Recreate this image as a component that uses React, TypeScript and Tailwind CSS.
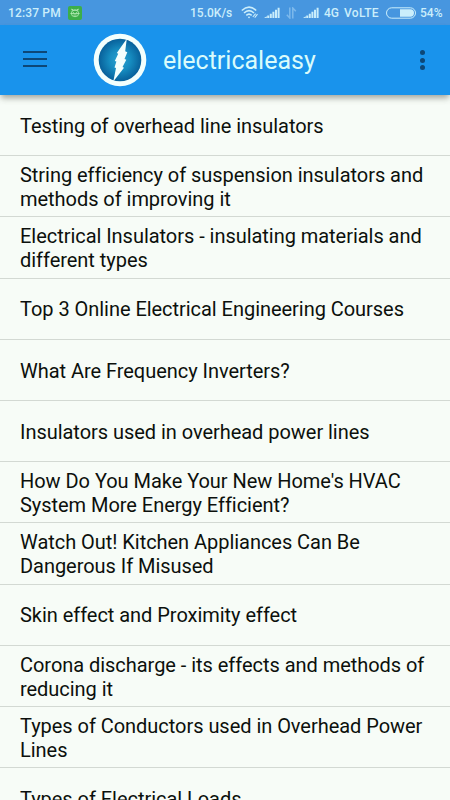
interface SignalProps {
  className?: string;
}

const posts = [
  "Testing of overhead line insulators",
  "String efficiency of suspension insulators and methods of improving it",
  "Electrical Insulators - insulating materials and different types",
  "Top 3 Online Electrical Engineering Courses",
  "What Are Frequency Inverters?",
  "Insulators used in overhead power lines",
  "How Do You Make Your New Home's HVAC System More Energy Efficient?",
  "Watch Out! Kitchen Appliances Can Be Dangerous If Misused",
  "Skin effect and Proximity effect",
  "Corona discharge - its effects and methods of reducing it",
  "Types of Conductors used in Overhead Power Lines",
  "Types of Electrical Loads",
];

const Signal: React.FC<SignalProps> = ({ className }) => (
  <svg width="16" height="12" viewBox="0 0 16 12" fill="#c9edfb" className={className}>
    <path d="M0 11 L2.8 9.3 V11Z M3.2 8.4h2V11h-2z M5.8 6.8h2V11h-2z M8.4 4.8h2V11h-2z M11 2.8h2v8.2h-2z M13.6 0.8h2V11h-2z" />
  </svg>
);

const StatusBar = () => (
  <div className="h-[25px] bg-[#4796df] flex items-center pl-2 pr-[8px] text-[12px] leading-none font-medium text-[#cbeefb]">
    <span className="w-[53px] whitespace-nowrap tracking-[0.15px]">12:37 PM</span>
    <svg width="14" height="14" viewBox="0 0 14 14" className="ml-[7px]">
      <rect width="14" height="14" rx="2" fill="#3cae49" />
      <g fill="none" stroke="#b9ecb9" strokeWidth="0.8">
        <path d="M4.5 4.8 L3.6 3 L5.5 4 H8.5 L10.4 3 L9.5 4.8" />
        <ellipse cx="7" cy="7.4" rx="3.7" ry="3.3" />
        <path d="M2.5 7.5h9M5.5 6.2v1M8.5 6.2v1M5.5 9h3" />
      </g>
    </svg>
    <span className="ml-auto w-[44px] whitespace-nowrap">15.0K/s</span>
    <svg width="18" height="13" viewBox="0 0 18 13" fill="none" stroke="#cbeefb" strokeWidth="1.5" className="ml-[7px]">
      <path d="M0.8 4.5 Q8 -2.2 15.2 4.5" />
      <path d="M3 7 Q8 2.2 13 7" />
      <path d="M5.3 9.4 Q8 6.8 10.7 9.4" />
      <circle cx="8" cy="11.3" r="0.9" fill="#cbeefb" stroke="none" />
      <path d="M11.8 11 L14.6 7.6M13.7 11.6 L16.5 8.2" strokeWidth="1.1" />
    </svg>
    <Signal className="ml-[5px]" />
    <svg width="11" height="12" viewBox="0 0 11 12" fill="none" stroke="#7db9ec" strokeWidth="1.5" className="ml-[6px]">
      <path d="M3.8 0.5V11L0.8 7.8M6.8 11.5V1L9.8 4.2" />
    </svg>
    <Signal className="ml-[6px]" />
    <span className="ml-[5px] w-[16px] whitespace-nowrap">4G</span>
    <span className="ml-[4px] w-[36px] whitespace-nowrap tracking-[0.3px]">VoLTE</span>
    <svg width="30" height="12" viewBox="0 0 30 12" className="ml-[6px]">
      <rect x="0.5" y="0.8" width="29" height="10.4" rx="5.2" fill="none" stroke="#cbeefb" />
      <path d="M14 2.3h10.3a3.7 3.7 0 0 1 0 7.4H14z" fill="#cbeefb" />
    </svg>
    <span className="ml-[4px] w-[22px] whitespace-nowrap">54%</span>
  </div>
);

const Logo = () => (
  <svg width="54" height="54" viewBox="0 0 54 54">
    <defs>
      <radialGradient id="disc">
        <stop offset="0" stopColor="#2ba5d2" />
        <stop offset="0.5" stopColor="#168cc0" />
        <stop offset="1" stopColor="#08609a" />
      </radialGradient>
    </defs>
    <circle cx="27" cy="27" r="26.3" fill="#f3fffd" />
    <circle cx="27" cy="27" r="21.3" fill="url(#disc)" />
    <path
      d="M33.8 5.8 L23.8 20 L25.2 20.8 L21.8 28 L23.4 28.5 L21.5 34.5 L23 35 L20.3 48.5 L31 34.8 L29.5 34 L33.3 26.8 L31.5 26 L34.3 19.2 L32.2 18.2Z"
      fill="#f3fffd"
    />
  </svg>
);

const Header = () => (
  <header className="relative h-[70px] bg-[#1993ec] flex items-center shadow-[0_4px_6px_-1px_rgba(60,60,50,0.45)]">
    <button className="ml-[23px] mb-[2px] w-6 flex flex-col gap-[5px]" aria-label="Menu">
      <span className="h-[2px] bg-[#0d4777]" />
      <span className="h-[2px] bg-[#0d4777]" />
      <span className="h-[2px] bg-[#0d4777]" />
    </button>
    <div className="ml-[46px]">
      <Logo />
    </div>
    <h1 className="ml-[16px] text-[25px] leading-none text-[#d9fbfb] pt-px">electricaleasy</h1>
    <button className="ml-auto mr-[25px] flex flex-col gap-[2.5px]" aria-label="More">
      <span className="size-[5px] rounded-full bg-[#0d4777]" />
      <span className="size-[5px] rounded-full bg-[#0d4777]" />
      <span className="size-[5px] rounded-full bg-[#0d4777]" />
    </button>
  </header>
);

export default function App() {
  return (
    <div className="w-[450px] h-[800px] overflow-hidden bg-[#f7fcf7] font-['Roboto',sans-serif]">
      <StatusBar />
      <Header />
      <ul>
        {posts.map((title) => (
          <li
            key={title}
            className="h-[61.2px] pl-5 pr-4 pt-[1.5px] flex items-center border-b border-[#d3d9d3] text-[20px] leading-6 tracking-[-0.04px] text-[#0c100c]"
          >
            {title}
          </li>
        ))}
      </ul>
    </div>
  );
}
